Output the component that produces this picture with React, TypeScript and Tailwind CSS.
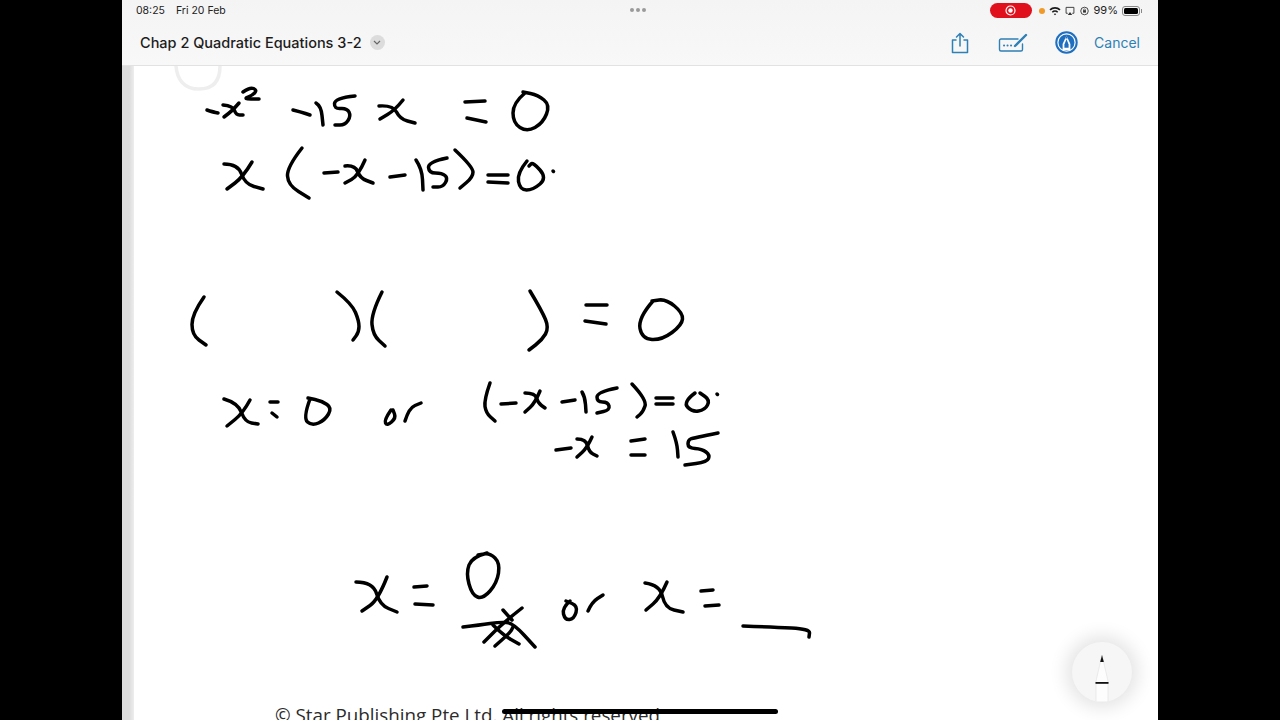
import React from "react";

type P = number[];
const strokes: P[] = [
  // -x^2 -15 x = 0
  [207,110,213,112,218,113],
  [223,105,233,106,236,115,243,115],[239,103,233,110,224,117],
  [243,92,250,87,257,90,253,95,243,99,259,99],
  [293,110,301,112,310,115],
  [316,103,321,106,323,125],
  [355,96,335,98,334,109,347,108,351,116,345,125,335,125],
  [379,106,393,105,400,119,415,123],[403,100,395,110,380,119],
  [465,102,485,101],[467,118,486,122],
  [525,93,513,103,513,123,527,132,543,123,550,105,538,95,523,92],
  // x(-x-15)=0
  [224,164,238,164,245,184,263,189],[252,162,243,177,227,189],
  [302,148,287,167,288,185,309,198],
  [324,173,338,172],
  [345,166,355,165,360,178,373,183],[365,160,358,176,345,183],
  [390,177,405,175],
  [416,160,422,169,423,190],
  [447,158,428,162,429,173,442,173,448,178,443,187,433,187],
  [455,150,473,167,473,177,460,188],
  [488,175,508,175],[488,182,508,183],
  [527,161,517,173,520,190,533,190,547,178,533,162,529,166],
  [553,171,553.5,171.5],
  // ( )( ) = 0
  [204,297,192,314,192,335,206,345],
  [337,292,352,304,359,321,359,332,353,340],
  [382,292,371,314,373,335,385,346],
  [530,291,542,311,549,328,542,340,529,350],
  [586,305,607,305],[585,321,606,324],
  [653,301,638,318,642,339,662,340,682,325,683,313,666,299,652,301],
  // x=0 or (-x-15)=0.
  [224,399,238,403,245,422,258,424],[250,400,243,413,227,426],
  [270,402,278,402],[272,413,277,417],
  [310,399,303,418,312,426,325,420,332,408,322,401,308,398],
  [391,410,384,420,387,426,396,418,393,410],
  [405,421,409,408,421,403],
  [490,383,484,400,486,413,495,421],
  [501,404,516,403],
  [525,393,535,393,538,403,545,408],[540,391,535,403,525,412],
  [562,402,575,400],
  [582,392,585,397,586,412],
  [617,388,597,392,597,402,608,402,610,410,597,413],
  [632,384,647,400,643,412,637,417],
  [656,398,673,398],[656,404,673,404],
  [695,393,683,402,692,412,705,410,710,400,700,393],
  [717,394,717.5,394.5],
  // -x = 15
  [556,450,571,448],
  [577,439,586,439,589,452,597,456],[592,437,587,448,577,457],
  [631,441,645,439],[631,455,645,455],
  [673,432,677,443,678,457],
  [718,433,693,438,688,440,688,448,702,449,710,455,707,462,685,465],
  // x = 0 / cross
  [356,582,373,582,380,605,397,612],[387,577,378,600,362,611],
  [414,587,427,586],[415,604,433,605],
  [487,553,472,557,466,573,472,595,483,599,497,583,500,563,490,553,478,555],
  [463,627,480,625,500,622,513,623,535,647],
  [522,608,503,623,484,642],
  [503,610,512,620],
  [495,646,510,633,513,627],
  [493,625,503,635,519,644],
  // or
  [570,601,562,608,565,620,574,619,578,606,566,601],
  [588,611,592,602,603,595],
  // x =
  [645,583,660,585,665,608,683,612],[667,582,660,598,646,610],
  [701,591,713,590],[705,606,719,605],
  // blank
  [743,626,773,627,810,629,809,637],
];

function toPath(p: P) {
  let d = `M${p[0]} ${p[1]}`;
  if (p.length === 4) return `${d}L${p[2]} ${p[3]}`;
  for (let i = 2; i < p.length - 2; i += 2) {
    d += `Q${p[i]} ${p[i + 1]} ${(p[i] + p[i + 2]) / 2} ${(p[i + 1] + p[i + 3]) / 2}`;
  }
  const n = p.length;
  return `${d}L${p[n - 2]} ${p[n - 1]}`;
}

function Share() {
  return (
    <svg width="20" height="22" viewBox="0 0 20 22" fill="none" stroke="#2f80b5" strokeWidth="1.5" strokeLinecap="round" strokeLinejoin="round">
      <path d="M6 8H2.5v12.5h15V8H14" />
      <path d="M10 14V1.5M6.5 5 10 1.5 13.5 5" />
    </svg>
  );
}
function KeyPen() {
  return (
    <svg width="30" height="20" viewBox="0 0 30 20" fill="none" stroke="#2f80b5" strokeWidth="1.4" strokeLinecap="round">
      <path d="M20 6H3a1.5 1.5 0 0 0-1.5 1.5v9A1.5 1.5 0 0 0 3 18h20a1.5 1.5 0 0 0 1.5-1.5V11" />
      <path d="M6 12.5h.1M9.5 12.5h.1M13 12.5h.1" strokeWidth="2" />
      <path d="M17 13 28 2" strokeWidth="2.4" />
    </svg>
  );
}
function Markup() {
  return (
    <svg width="23" height="23" viewBox="0 0 23 23">
      <circle cx="11.5" cy="11.5" r="11.2" fill="#1f6fc0" />
      <circle cx="11.5" cy="11.5" r="8.6" fill="none" stroke="#ffffff" strokeWidth="1.2" />
      <path d="M11.5 4.6 15.4 13v6h-7.8v-6z" fill="#ffffff" />
      <path d="M11.5 8.2 13.6 13.4v3.4H9.4v-3.4z" fill="#1f6fc0" />
      <path d="M11.5 4.6 12.6 7.4h-2.2z" fill="#1f6fc0" />
    </svg>
  );
}

export default function App() {
  return (
    <div className="flex h-[720px] w-[1280px] justify-center overflow-hidden bg-black font-['Inter',sans-serif]">
      <div className="flex w-[1036px] flex-col">
        <header className="flex h-[66px] shrink-0 flex-col border-b border-[#e2e2e2] bg-gradient-to-b from-[#f4f4f4] to-[#f8f8f8]">
          <div className="relative flex h-[21px] items-center justify-between pl-[14px] pr-[16px] text-[10.5px] text-[#222]">
            <div className="flex gap-[11px]"><span>08:25</span><span>Fri 20 Feb</span></div>
            <div className="absolute left-[508px] top-[8px] flex gap-[2px]">
              <span className="h-[4px] w-[4px] rounded-full bg-[#9a9a9a]" />
              <span className="h-[4px] w-[4px] rounded-full bg-[#9a9a9a]" />
              <span className="h-[4px] w-[4px] rounded-full bg-[#9a9a9a]" />
            </div>
            <div className="flex items-center">
              <div className="flex h-[15px] w-[42px] items-center justify-center rounded-full bg-[#e0101c]">
                <svg width="11" height="11" viewBox="0 0 11 11"><circle cx="5.5" cy="5.5" r="4.5" fill="none" stroke="#fff" strokeWidth="1.2" /><circle cx="5.5" cy="5.5" r="2.2" fill="#fff" /></svg>
              </div>
              <span className="ml-[7px] h-[6px] w-[6px] rounded-full bg-[#f09a2a]" />
              <svg className="ml-[4px]" width="12" height="10" viewBox="0 0 13 10"><path d="M.5 3.2a8.5 8.5 0 0 1 12 0L11.3 4.5a6.8 6.8 0 0 0-9.6 0zM3 5.7a5 5 0 0 1 7 0L8.8 7a3.3 3.3 0 0 0-4.6 0zM6.5 9.6 5.2 8.2a1.9 1.9 0 0 1 2.6 0z" fill="#1a1a1a" /></svg>
              <svg className="ml-[4px]" width="10" height="10" viewBox="0 0 11 10" fill="none" stroke="#333" strokeWidth="1"><path d="M3 7.5H1.2V1h8.6v6.5H8" /><path d="M5.5 6 8 9.5H3z" fill="#333" stroke="none" /></svg>
              <svg className="ml-[5px]" width="9" height="10" viewBox="0 0 10 10" fill="none" stroke="#333" strokeWidth="1"><circle cx="5" cy="5" r="4.2" /><rect x="3.4" y="4.2" width="3.2" height="2.6" fill="#333" stroke="none" /><circle cx="5" cy="3.8" r="1.1" strokeWidth="0.7" /></svg>
              <span className="ml-[5px] text-[11px]">99%</span>
              <div className="ml-[4px] flex items-center">
                <div className="h-[10px] w-[18px] rounded-[3px] border border-[#888] p-[1px]"><div className="h-full w-full rounded-[1.5px] bg-black" /></div>
                <span className="ml-[1px] h-[4px] w-[1px] bg-[#888]" />
              </div>
            </div>
          </div>
          <div className="flex flex-1 items-center pb-[1px] pl-[18px] pr-[18px]">
            <span className="text-[14.5px] font-medium text-[#1c1c1c]">Chap 2 Quadratic Equations 3-2</span>
            <span className="ml-[8px] flex h-[15px] w-[15px] items-center justify-center rounded-full bg-[#dcdcdc]">
              <svg width="8" height="6" viewBox="0 0 8 6" fill="none" stroke="#666" strokeWidth="1.2"><path d="m1 1 3 3 3-3" /></svg>
            </span>
            <div className="ml-auto flex items-center">
              <span className="-ml-[1px] flex"><Share /></span>
              <span className="ml-[28px] flex"><KeyPen /></span>
              <span className="ml-[27px] flex"><Markup /></span>
              <span className="ml-[16px] text-[14px] text-[#2f80b5]">Cancel</span>
            </div>
          </div>
        </header>
        <div className="flex min-h-0 flex-1">
          <div className="w-[12px] shrink-0 bg-gradient-to-r from-[#dcdcdc] from-60% to-[#eeeeee]" />
          <main className="relative flex flex-1 flex-col justify-end overflow-hidden bg-white pl-[141px]">
            <div className="-mb-[7px] whitespace-nowrap font-['Open_Sans',sans-serif] text-[18.8px] leading-[24px] text-[#2b2b2b]">© Star Publishing Pte Ltd. All rights reserved</div>
            <svg className="absolute left-0 top-0" width="1024" height="654" viewBox="134 66 1024 654" fill="none" strokeLinecap="round" strokeLinejoin="round">
              <path d="M176 66C177 78 183 89 199 89C214 89 220 80 220 66" stroke="#eeeeee" strokeWidth="3.5" />
              {strokes.map((s, i) => <path key={i} d={toPath(s)} stroke="#000" strokeWidth="3.5" />)}
            </svg>
            <div className="absolute bottom-[6px] left-[368px] h-[5px] w-[276px] rounded-full bg-black" />
            <div className="absolute bottom-[18px] right-[26px] flex h-[60px] w-[60px] items-start justify-center overflow-hidden rounded-full bg-[#f6f6f6] shadow-[0_0_18px_6px_rgba(0,0,0,0.11)]">
              <svg className="mt-[13px]" width="14" height="47" viewBox="0 0 14 47">
                <path d="M7 0 1 26v21h12V26z" fill="#fdfdfd" stroke="#e6e6e6" strokeWidth="0.8" />
                <path d="M7 0 5.2 7h3.6z" fill="#111" />
                <rect x="0.5" y="27" width="13" height="1.8" fill="#111" />
              </svg>
            </div>
          </main>
        </div>
      </div>
    </div>
  );
}
